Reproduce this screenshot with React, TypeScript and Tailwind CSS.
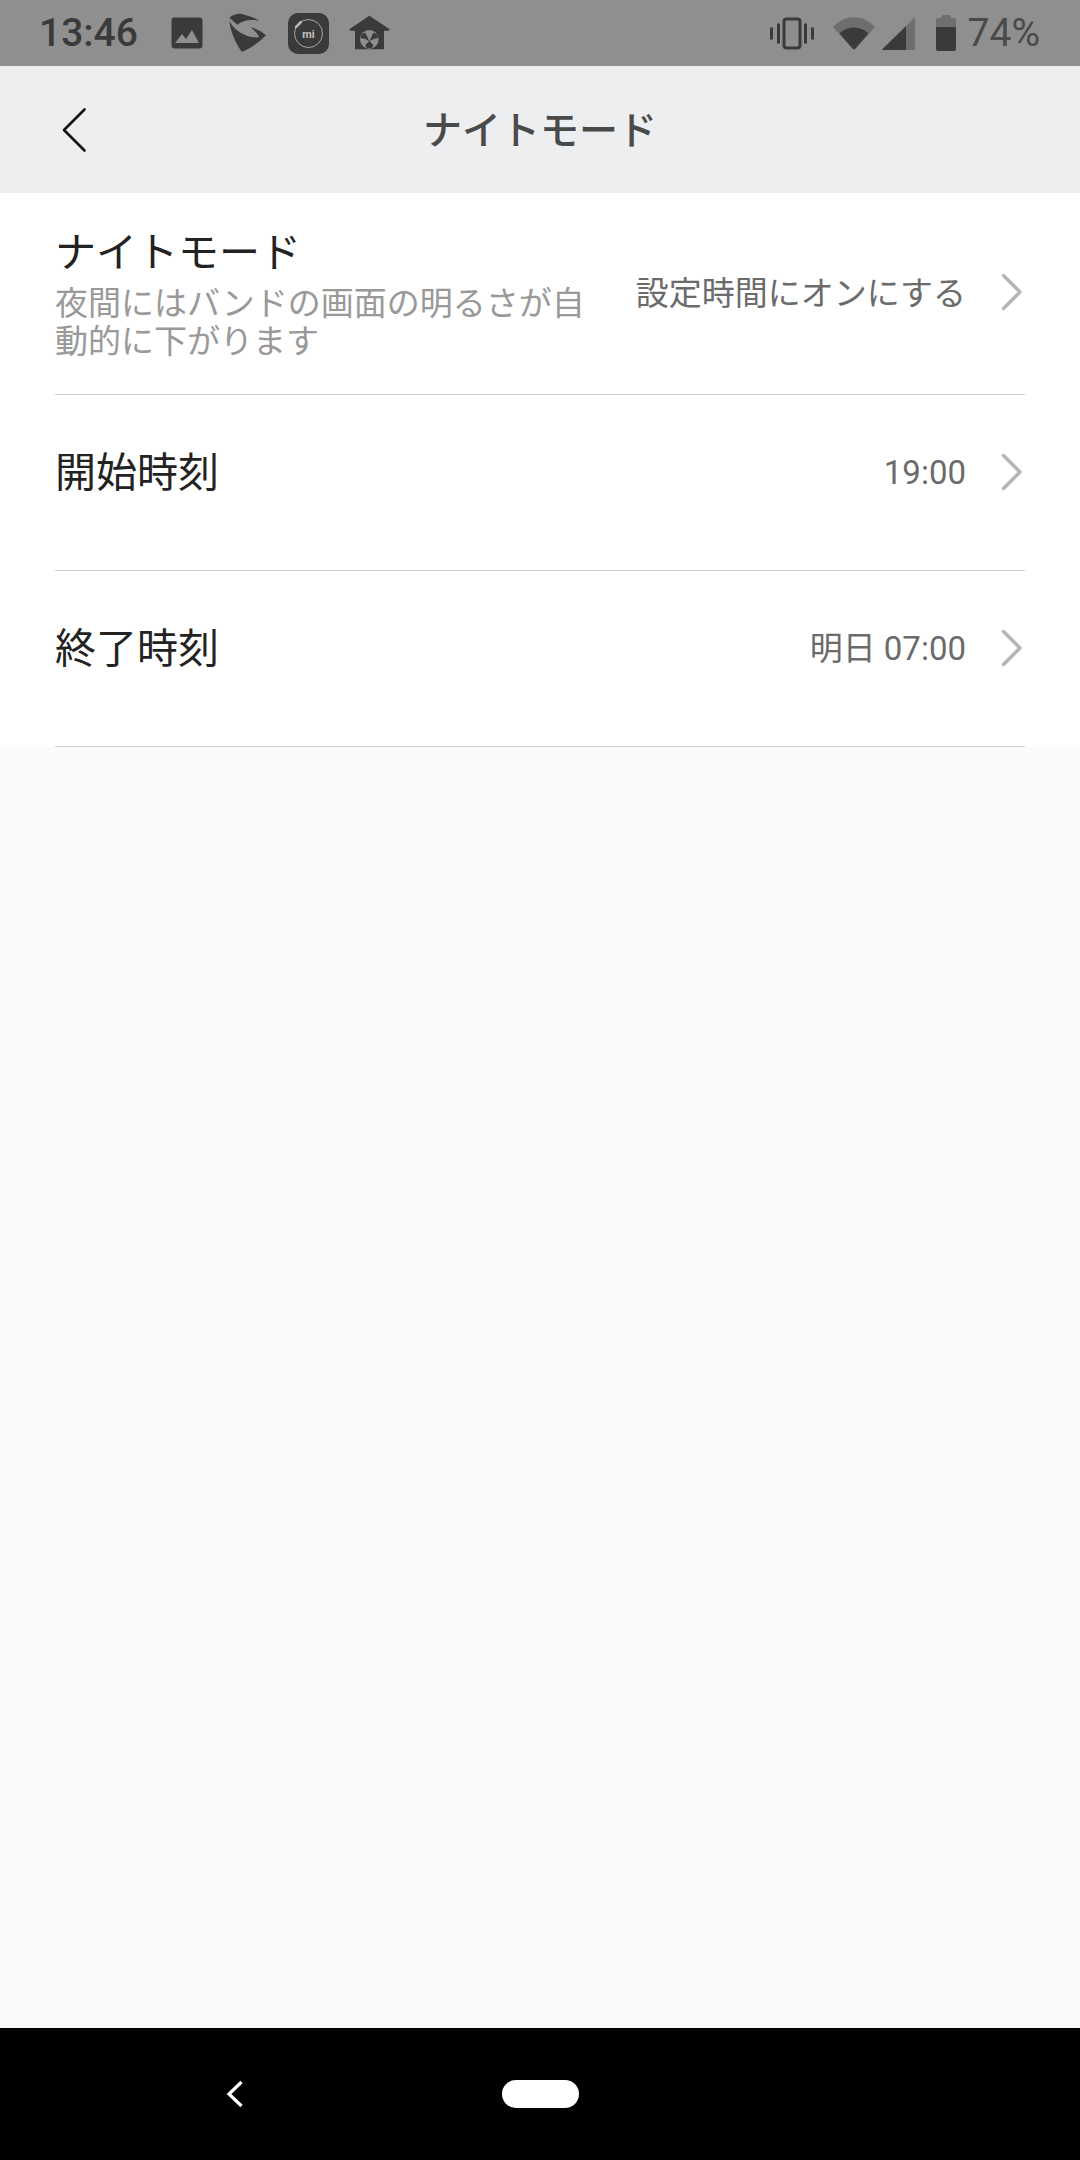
import React from 'react';

const rows = [
  { id: 'start', title: '開始時刻', value: '19:00' },
  { id: 'end', title: '終了時刻', value: '明日 07:00' },
];

function Chevron({ up }: { up?: boolean }) {
  return (
    <svg width="21" height="38" viewBox="0 0 21 38" fill="none" className={up ? 'ml-[35px] mr-[3px] shrink-0 -mt-[3px]' : 'ml-[35px] mr-[3px] shrink-0 -mt-[2px]'}>
      <path d="M2.5 2.5L19 19L2.5 35.5" stroke="#b5b5b5" strokeWidth="3.4" strokeLinecap="round" strokeLinejoin="round" />
    </svg>
  );
}

function StatusLeftIcons() {
  return (
    <div className="flex items-center ml-[35px]">
      {/* gallery */}
      <svg width="32" height="32" viewBox="0 0 32 32">
        <rect x="0.5" y="0.5" width="31" height="31" rx="3" fill="#3a3a3a" />
        <path d="M4 26L11 17L15 22L21 13L28 26Z" fill="#8f8f8f" />
      </svg>
      {/* swoosh app */}
      <svg width="60" height="50" viewBox="0 0 180 150" className="ml-[19px]">
        <path d="M22 36C30 62 70 92 112 88C105 75 95 65 85 58C105 62 120 72 132 82C110 105 85 120 60 132C40 105 25 70 22 36Z" fill="#3a3a3a" />
        <path d="M22 29C35 18 50 15 60 18C80 24 100 30 112 38C85 32 60 38 46 50C38 42 30 36 22 29Z" fill="#3a3a3a" />
      </svg>
      {/* mi fit */}
      <svg width="41" height="41" viewBox="0 0 41 41" className="ml-[6px]">
        <rect width="41" height="41" rx="10" fill="#3a3a3a" />
        <circle cx="20.5" cy="20.5" r="14" fill="none" stroke="#a8a8a8" strokeWidth="1" />
        <path d="M8 14L13 9" stroke="#b5b5b5" strokeWidth="2.5" strokeLinecap="round" />
        <text x="20.5" y="24.5" textAnchor="middle" fontSize="11" fontWeight="700" fill="#c0c0c0" fontFamily="Roboto, sans-serif">mi</text>
      </svg>
      {/* house ball */}
      <svg width="60" height="46" viewBox="0 0 180 138" className="ml-[11px]">
        <path d="M88 17L148 57Q150 62 145 62H132V118H45V62H32Q27 62 29 57Z" fill="#3a3a3a" />
        <circle cx="88" cy="88" r="28" fill="#8f8f8f" />
        <path d="M88 94L76 68L66 72L61 84L74 86Z M88 94L100 68L110 72L115 84L102 86Z M88 92L76 106L80 114H96L100 106Z" fill="#3a3a3a" />
      </svg>
    </div>
  );
}

function StatusRightIcons() {
  return (
    <div className="flex items-center ml-auto">
      {/* vibrate */}
      <svg width="44" height="33" viewBox="0 0 44 33">
        <rect x="14" y="2" width="16" height="29" rx="2.5" fill="none" stroke="#3a3a3a" strokeWidth="3" />
        <rect x="7" y="6.5" width="3" height="20" fill="#3a3a3a" />
        <rect x="34" y="6.5" width="3" height="20" fill="#3a3a3a" />
        <rect x="0" y="10.5" width="3" height="12" fill="#3a3a3a" />
        <rect x="41" y="10.5" width="3" height="12" fill="#3a3a3a" />
      </svg>
      {/* wifi */}
      <svg width="42" height="33" viewBox="0 0 42 33" className="ml-[19px]">
        <path d="M0 10C12 -3 30 -3 42 10L21 33Z" fill="#6e6e6e" />
        <path d="M6.5 16.5C14 8.5 28 8.5 35.5 16.5L22.5 31.5Q21 33 19.5 31.5Z" fill="#3a3a3a" />
      </svg>
      {/* signal */}
      <svg width="33" height="33" viewBox="0 0 33 33" className="ml-[7px]">
        <path d="M33 0V33H24V9Z" fill="#6e6e6e" />
        <path d="M24 9V33H1Q-0.5 33 0.5 32Z" fill="#3a3a3a" />
      </svg>
      {/* battery */}
      <svg width="20" height="36" viewBox="0 0 20 36" className="ml-[21px]">
        <path d="M5 3Q5 0 7 0H13Q15 0 15 3H18Q20 3 20 5V12H0V5Q0 3 2 3Z" fill="#6e6e6e" />
        <path d="M0 12H20V34Q20 36 18 36H2Q0 36 0 34Z" fill="#3a3a3a" />
      </svg>
      <span className="ml-[12px] mr-[40px] text-[39px] leading-none text-[#4a4a4a]">74%</span>
    </div>
  );
}

export default function App() {
  return (
    <div className="w-[1080px] h-[2160px] flex flex-col bg-[#fafafa] font-['Roboto','Noto_Sans_CJK_JP',sans-serif]">
      {/* Status bar */}
      <div className="h-[66px] flex items-center bg-[#8f8f8f] shrink-0">
        <span className="ml-[39px] w-[97px] text-[39px] leading-none font-medium text-[#3a3a3a]">13:46</span>
        <StatusLeftIcons />
        <StatusRightIcons />
      </div>

      {/* Header */}
      <div className="relative h-[127px] flex items-center justify-center bg-[#edeef0] shrink-0">
        <svg width="26" height="46" viewBox="0 0 26 46" fill="none" className="absolute left-[61px] top-[41px]">
          <path d="M23.5 2.5L3 23L23.5 43.5" stroke="#111" strokeWidth="2.6" strokeLinecap="round" strokeLinejoin="round" />
        </svg>
        <h1 className="mt-[3px] text-[39px] font-medium text-[#4a4a4a]">ナイトモード</h1>
      </div>

      {/* Settings */}
      <div className="bg-white px-[55px] shrink-0">
        <div className="h-[202px] flex items-center border-b border-[#cfcfcf]">
          <div className="w-[545px] mt-[3px]">
            <div className="text-[41px] leading-[46px] text-[#222]">ナイトモード</div>
            <p className="mt-[9px] text-[33px] leading-[38px] text-[#999]">夜間にはバンドの画面の明るさが自動的に下がります</p>
          </div>
          <span className="ml-auto text-[33px] text-[#6b6b6b]">設定時間にオンにする</span>
          <Chevron up />
        </div>
        {rows.map((row) => (
          <div key={row.id} className="h-[176px] pb-[20px] flex items-center border-b border-[#cfcfcf]">
            <span className="mt-[3px] text-[41px] text-[#222]">{row.title}</span>
            <span className="ml-auto text-[33px] text-[#6b6b6b]">{row.value}</span>
            <Chevron />
          </div>
        ))}
      </div>

      {/* Nav bar */}
      <div className="mt-auto h-[132px] relative flex items-center justify-center bg-black shrink-0">
        <svg width="18" height="28" viewBox="0 0 18 28" fill="none" className="absolute left-[226px] top-[52px]">
          <path d="M15.5 2L3 14L15.5 26" stroke="#fff" strokeWidth="3.2" />
        </svg>
        <div className="w-[77px] h-[28px] rounded-full bg-white" />
      </div>
    </div>
  );
}
